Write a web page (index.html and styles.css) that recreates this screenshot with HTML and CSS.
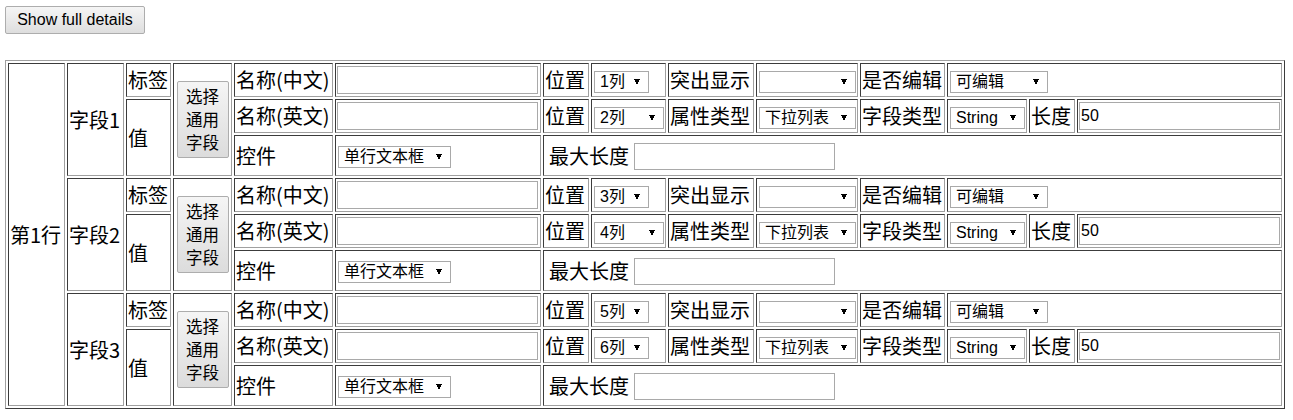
FILE: index.html
```html
<!DOCTYPE html>
<html lang="zh-CN">
<head>
<meta charset="utf-8">
<title>字段配置</title>
<link rel="stylesheet" href="styles.css">
</head>
<body>
<button class="toggle" type="button">Show full details</button>
<table class="grid">
<tbody>
<!-- 字段1 -->
<tr class="r1">
  <td class="c-row" rowspan="9">第1行</td>
  <td class="c-field" rowspan="3">字段1</td>
  <td class="c-kind">标签</td>
  <td class="c-pick" rowspan="3"><button class="pick" type="button"><span class="pick-line">选择</span><span class="pick-line">通用</span><span class="pick-line">字段</span></button></td>
  <td class="c-label">名称(中文)</td>
  <td class="c-name"><input class="text" type="text"></td>
  <td class="c-pos">位置</td>
  <td class="c-possel"><select class="sel w-pos-s"><option>1列</option></select></td>
  <td class="c-attr">突出显示</td>
  <td class="c-attrsel"><select class="sel w-wide"><option></option></select></td>
  <td class="c-type">是否编辑</td>
  <td colspan="3"><select class="sel w-edit"><option>可编辑</option></select></td>
</tr>
<tr class="r2">
  <td class="c-kind" rowspan="2">值</td>
  <td class="c-label">名称(英文)</td>
  <td class="c-name"><input class="text" type="text"></td>
  <td class="c-pos">位置</td>
  <td class="c-possel"><select class="sel w-pos-l"><option>2列</option></select></td>
  <td class="c-attr">属性类型</td>
  <td class="c-attrsel"><select class="sel w-wide"><option>下拉列表</option></select></td>
  <td class="c-type">字段类型</td>
  <td class="c-typesel"><select class="sel w-str"><option>String</option></select></td>
  <td class="c-len">长度</td>
  <td class="c-leninput"><input class="text" type="text" value="50"></td>
</tr>
<tr class="r3">
  <td class="c-label">控件</td>
  <td class="c-name"><select class="sel w-ctl"><option>单行文本框</option></select></td>
  <td class="c-max" colspan="8"><span class="max-label">最大长度</span><input class="text short" type="text"></td>
</tr>
<!-- 字段2 -->
<tr class="r1">
  <td class="c-field" rowspan="3">字段2</td>
  <td class="c-kind">标签</td>
  <td class="c-pick" rowspan="3"><button class="pick" type="button"><span class="pick-line">选择</span><span class="pick-line">通用</span><span class="pick-line">字段</span></button></td>
  <td class="c-label">名称(中文)</td>
  <td class="c-name"><input class="text" type="text"></td>
  <td class="c-pos">位置</td>
  <td class="c-possel"><select class="sel w-pos-s"><option>3列</option></select></td>
  <td class="c-attr">突出显示</td>
  <td class="c-attrsel"><select class="sel w-wide"><option></option></select></td>
  <td class="c-type">是否编辑</td>
  <td colspan="3"><select class="sel w-edit"><option>可编辑</option></select></td>
</tr>
<tr class="r2">
  <td class="c-kind" rowspan="2">值</td>
  <td class="c-label">名称(英文)</td>
  <td class="c-name"><input class="text" type="text"></td>
  <td class="c-pos">位置</td>
  <td class="c-possel"><select class="sel w-pos-l"><option>4列</option></select></td>
  <td class="c-attr">属性类型</td>
  <td class="c-attrsel"><select class="sel w-wide"><option>下拉列表</option></select></td>
  <td class="c-type">字段类型</td>
  <td class="c-typesel"><select class="sel w-str"><option>String</option></select></td>
  <td class="c-len">长度</td>
  <td class="c-leninput"><input class="text" type="text" value="50"></td>
</tr>
<tr class="r3">
  <td class="c-label">控件</td>
  <td class="c-name"><select class="sel w-ctl"><option>单行文本框</option></select></td>
  <td class="c-max" colspan="8"><span class="max-label">最大长度</span><input class="text short" type="text"></td>
</tr>
<!-- 字段3 -->
<tr class="r1">
  <td class="c-field" rowspan="3">字段3</td>
  <td class="c-kind">标签</td>
  <td class="c-pick" rowspan="3"><button class="pick" type="button"><span class="pick-line">选择</span><span class="pick-line">通用</span><span class="pick-line">字段</span></button></td>
  <td class="c-label">名称(中文)</td>
  <td class="c-name"><input class="text" type="text"></td>
  <td class="c-pos">位置</td>
  <td class="c-possel"><select class="sel w-pos-s"><option>5列</option></select></td>
  <td class="c-attr">突出显示</td>
  <td class="c-attrsel"><select class="sel w-wide"><option></option></select></td>
  <td class="c-type">是否编辑</td>
  <td colspan="3"><select class="sel w-edit"><option>可编辑</option></select></td>
</tr>
<tr class="r2">
  <td class="c-kind" rowspan="2">值</td>
  <td class="c-label">名称(英文)</td>
  <td class="c-name"><input class="text" type="text"></td>
  <td class="c-pos">位置</td>
  <td class="c-possel"><select class="sel w-pos-s"><option>6列</option></select></td>
  <td class="c-attr">属性类型</td>
  <td class="c-attrsel"><select class="sel w-wide"><option>下拉列表</option></select></td>
  <td class="c-type">字段类型</td>
  <td class="c-typesel"><select class="sel w-str"><option>String</option></select></td>
  <td class="c-len">长度</td>
  <td class="c-leninput"><input class="text" type="text" value="50"></td>
</tr>
<tr class="r3">
  <td class="c-label">控件</td>
  <td class="c-name"><select class="sel w-ctl"><option>单行文本框</option></select></td>
  <td class="c-max" colspan="8"><span class="max-label">最大长度</span><input class="text short" type="text"></td>
</tr>
</tbody>
</table>
</body>
</html>
```

FILE: styles.css
```css
html, body {
  background: #fff;
}

body {
  margin: 6px 5px 0;
  font-family: "Noto Sans CJK SC", "Liberation Sans", sans-serif;
  font-size: 20px;
  color: #000;
}

.toggle {
  display: block;
  box-sizing: border-box;
  width: 140px;
  height: 28px;
  margin: 0 0 26px;
  padding: 0;
  font-family: "Liberation Sans", Arial, sans-serif;
  font-size: 16px;
  color: #000;
  border: 1px solid #adadad;
  border-radius: 2px;
  background: linear-gradient(#f5f5f5, #dedede);
}

.grid {
  border-collapse: separate;
  border-spacing: 2px;
  border: 1px solid;
  border-color: #a0a0a0 #3c3c3c #3c3c3c #a0a0a0;
}

.grid td {
  box-sizing: border-box;
  padding: 1px;
  border: 1px solid;
  border-color: #3c3c3c #a0a0a0 #a0a0a0 #3c3c3c;
  vertical-align: middle;
  white-space: nowrap;
  line-height: 24px;
  text-align: left;
}

.grid tr.r1 { height: 34px; }
.grid tr.r2 { height: 34px; }
.grid tr.r3 { height: 41px; }

/* column widths (outer, border-box) */
.grid .c-row { width: 57px; }
.grid .c-field { width: 57px; }
.grid .c-kind { width: 45px; }
.grid .c-pick { width: 59px; text-align: center; }
.grid .c-label { width: 99px; }
.grid .c-name { width: 206px; }
.grid .c-pos { width: 46px; }
.grid .c-possel { width: 75px; }
.grid .c-attr { width: 86px; }
.grid .c-attrsel { width: 101px; }
.grid .c-type { width: 85px; }
.grid .c-typesel { width: 79px; }
.grid .c-len { width: 46px; }
.grid .c-leninput { width: 205px; }

.grid .c-max { padding-left: 5px; }

.pick {
  box-sizing: border-box;
  display: inline-flex;
  flex-direction: column;
  justify-content: center;
  align-items: center;
  gap: 6px;
  width: 52px;
  height: 77px;
  padding: 0;
  margin: 0;
  font-family: "Noto Sans CJK SC", sans-serif;
  font-size: 16.5px;
  line-height: 17px;
  color: #000;
  border: 1px solid #adadad;
  border-radius: 2px;
  background: linear-gradient(#f5f5f5, #dcdcdc);
  vertical-align: middle;
}

.pick-line {
  display: block;
}

.text {
  box-sizing: border-box;
  width: 201px;
  height: 28px;
  margin: 0;
  padding: 0 1px;
  border: 1px solid #a9a9a9;
  border-radius: 0;
  font-family: "Liberation Sans", Arial, sans-serif;
  font-size: 16px;
  color: #000;
  background: #fff;
  vertical-align: middle;
}

.text.short {
  height: 27px;
  margin-left: 5px;
}

.max-label {
  vertical-align: middle;
}

.sel {
  -webkit-appearance: none;
  appearance: none;
  box-sizing: border-box;
  height: 22px;
  margin: 0 0 0 1px;
  padding: 0 16px 0 5px;
  border: 1px solid #a9a9a9;
  border-radius: 0;
  font-family: "Liberation Sans", "Noto Sans CJK SC", sans-serif;
  font-size: 16px;
  line-height: 20px;
  color: #000;
  background:
    linear-gradient(to top right, transparent 50%, #000 50%) right 11px center / 3px 6px no-repeat,
    linear-gradient(to top left, transparent 50%, #000 50%) right 8px center / 3px 6px no-repeat,
    #fff;
  vertical-align: middle;
}

.w-pos-s { width: 55px; }
.w-pos-l { width: 70px; }
.w-wide { width: 97px; }
.w-edit { width: 98px; }
.w-str { width: 75px; }
.w-ctl { width: 113px; }
```
